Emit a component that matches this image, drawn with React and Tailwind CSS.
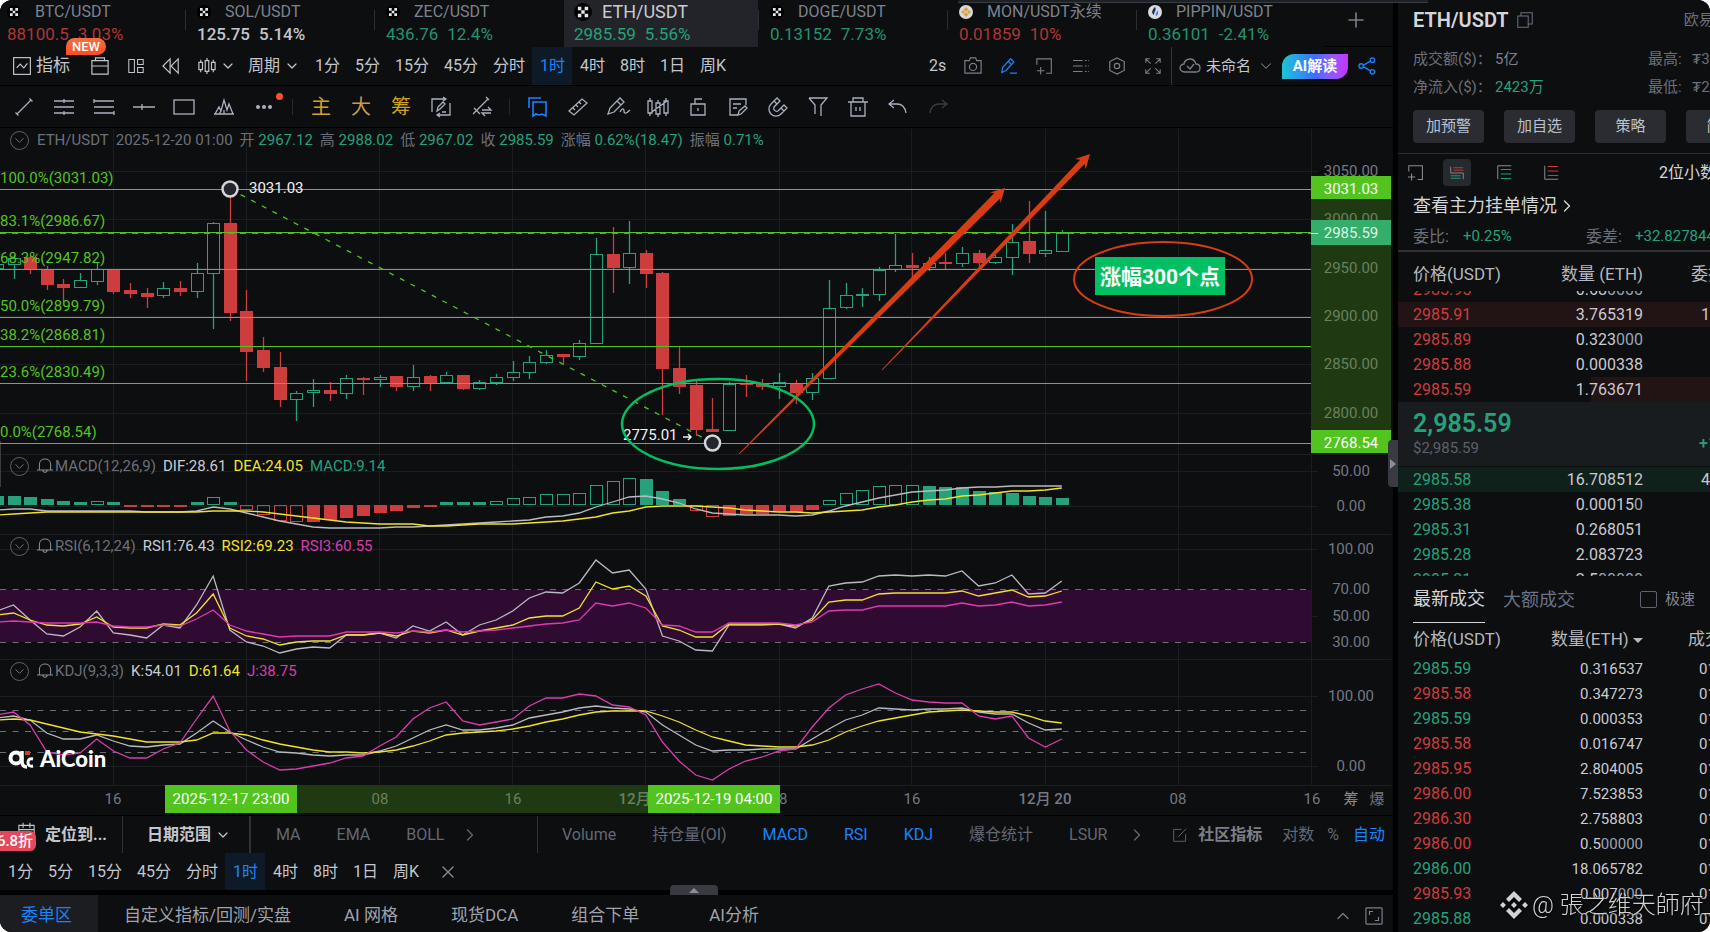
import { useState } from 'react';
import clsx from 'clsx';
import { ChevronDown, ChevronRight, ChevronUp, X, Plus } from 'lucide-react';

const FONT = "font-['Roboto','Noto_Sans_CJK_SC',sans-serif]";

const tabs = [
  { name: 'BTC/USDT', price: '88100.5', change: '3.03%', color: 'text-[#b03535]', width: 'w-[185px] pl-[7px]', icon: 'okx' },
  { name: 'SOL/USDT', price: '125.75', change: '5.14%', color: 'text-[#c3c5ca]', width: 'w-[189px] pl-3', icon: 'okx' },
  { name: 'ZEC/USDT', price: '436.76', change: '12.4%', color: 'text-[#22936f]', width: 'w-[190px] pl-3', icon: 'okx' },
  { name: 'ETH/USDT', price: '2985.59', change: '5.56%', color: 'text-[#25a17c]', width: 'w-[194px] pl-[10px]', icon: 'okx', active: true },
  { name: 'DOGE/USDT', price: '0.13152', change: '7.73%', color: 'text-[#22936f]', width: 'w-[189px] pl-3', icon: 'okx' },
  { name: 'MON/USDT永续', price: '0.01859', change: '10%', color: 'text-[#b03535]', width: 'w-[189px] pl-3', icon: 'bnb' },
  { name: 'PIPPIN/USDT', price: '0.36101', change: '-2.41%', color: 'text-[#22936f]', width: 'w-[189px] pl-3', icon: 'htx' },
];

const frames = ['1分', '5分', '15分', '45分', '分时', '1时', '4时', '8时', '1日', '周K'];

// [up, bodyTop, bodyBottom, high, low]
const candles = [
  [1, 264, 269, 262, 271], [1, 258, 265, 255, 279], [0, 257, 269, 255, 274], [0, 270, 285, 266, 290],
  [0, 284, 288, 279, 302], [1, 280, 288, 273, 288], [1, 269, 282, 263, 285], [0, 270, 292, 270, 294],
  [0, 290, 294, 283, 298], [0, 293, 297, 288, 308], [1, 288, 296, 282, 298], [0, 288, 292, 281, 296],
  [1, 273, 292, 263, 298], [1, 223, 274, 222, 329], [0, 223, 313, 189, 321], [0, 311, 352, 290, 381],
  [0, 350, 368, 337, 372], [0, 367, 400, 352, 407], [1, 393, 400, 391, 421], [1, 390, 393, 379, 407],
  [0, 390, 394, 382, 401], [1, 378, 394, 375, 399], [0, 378, 380, 377, 395], [1, 377, 380, 375, 387],
  [0, 376, 387, 376, 391], [1, 377, 387, 365, 391], [0, 376, 383, 375, 391], [1, 375, 383, 372, 383],
  [0, 375, 389, 375, 390], [1, 382, 389, 380, 390], [1, 377, 383, 374, 385], [1, 372, 378, 361, 381],
  [1, 362, 373, 356, 379], [1, 355, 363, 350, 364], [0, 354, 357, 354, 364], [1, 343, 357, 340, 360],
  [1, 254, 344, 238, 344], [0, 254, 268, 227, 293], [1, 253, 268, 221, 284], [0, 253, 274, 250, 288],
  [0, 273, 369, 272, 415], [0, 368, 387, 347, 394], [0, 385, 430, 381, 436], [0, 429, 432, 398, 432],
  [1, 384, 431, 382, 431], [0, 383, 385, 375, 397], [0, 383, 387, 379, 390], [1, 382, 387, 373, 399],
  [0, 383, 393, 380, 404], [1, 378, 393, 373, 400], [1, 308, 379, 280, 379], [1, 295, 308, 283, 309],
  [1, 294, 296, 288, 307], [1, 270, 295, 267, 301], [1, 265, 270, 234, 272], [0, 265, 268, 253, 277],
  [1, 263, 268, 257, 271], [0, 262, 264, 253, 269], [1, 253, 264, 247, 267], [0, 253, 263, 250, 267],
  [1, 257, 263, 255, 264], [1, 242, 258, 224, 275], [0, 241, 254, 201, 263], [1, 250, 254, 211, 257],
  [1, 233, 252, 230, 252],
];

// MACD histogram: height above (+) or below (-) zero, 'h' marks a hollow bar
const macdBars = [
  '9', '9', '8', '6', '4', '3', '4h', '3', '-2', '-2', '-2', '-2', '3', '8h', '3',
  '-5h', '-10h', '-16h', '-17h', '-17', '-15', '-13', '-11', '-8', '-6', '-3', '-2', '3', '3', '3',
  '4h', '7h', '8h', '11h', '11h', '12h', '20h', '24h', '27h', '26', '14', '6', '-6h', '-12h', '-11',
  '-9', '-9', '-7', '-7', '-5', '5h', '12h', '15h', '19h', '20h', '20h', '19', '18', '18', '14', '13',
  '12', '9', '8', '7',
];

const series = {
  dif: [510, 509, 509, 511, 511, 511, 511, 511, 511, 512, 512, 512, 511, 507, 509, 513, 517, 521, 524, 527, 528, 528, 528, 528, 527, 527, 526, 525, 524, 523, 522, 521, 520, 517, 516, 513, 507, 502, 497, 496, 499, 503, 509, 513, 514, 515, 515, 515, 516, 515, 511, 506, 502, 498, 495, 492, 491, 490, 488, 487, 487, 486, 486, 486, 486],
  dea: [515, 514, 513, 512, 512, 512, 512, 512, 512, 512, 512, 512, 512, 511, 511, 511, 512, 514, 516, 518, 520, 522, 523, 524, 524, 524, 526, 526, 525, 524, 524, 524, 523, 522, 521, 519, 517, 513, 511, 507, 506, 506, 506, 507, 508, 510, 511, 512, 512, 513, 512, 511, 510, 507, 505, 502, 500, 499, 496, 495, 493, 491, 491, 490, 488],
  rsi1: [611, 605, 620, 634, 636, 627, 611, 633, 635, 638, 625, 628, 605, 576, 630, 642, 646, 653, 649, 647, 648, 635, 635, 633, 638, 626, 631, 622, 635, 625, 620, 611, 598, 592, 593, 583, 560, 573, 570, 589, 636, 641, 650, 651, 625, 625, 625, 624, 628, 618, 586, 583, 582, 576, 575, 576, 575, 576, 571, 586, 583, 575, 594, 593, 581],
  rsi2: [615, 613, 620, 625, 626, 624, 617, 627, 628, 628, 624, 625, 613, 594, 628, 636, 639, 645, 642, 641, 641, 635, 635, 633, 636, 631, 633, 630, 635, 631, 628, 625, 618, 616, 616, 608, 582, 589, 586, 596, 626, 630, 637, 637, 624, 624, 624, 624, 626, 620, 602, 600, 600, 594, 593, 593, 593, 593, 591, 596, 593, 590, 597, 596, 591],
  rsi3: [622, 621, 622, 623, 623, 623, 622, 626, 627, 627, 625, 626, 619, 610, 625, 631, 634, 637, 636, 636, 636, 632, 632, 632, 633, 631, 632, 630, 632, 631, 630, 628, 626, 624, 623, 620, 603, 606, 603, 608, 625, 626, 632, 632, 623, 623, 623, 623, 625, 622, 611, 610, 610, 606, 606, 606, 606, 606, 603, 606, 605, 602, 606, 605, 602],
  k: [718, 716, 720, 733, 739, 739, 735, 741, 746, 747, 745, 744, 733, 721, 732, 740, 747, 752, 753, 755, 756, 755, 755, 751, 746, 738, 730, 725, 730, 730, 728, 725, 718, 715, 712, 708, 706, 708, 709, 712, 725, 735, 745, 751, 750, 750, 749, 749, 749, 739, 729, 720, 715, 708, 709, 710, 709, 709, 708, 712, 714, 714, 723, 730, 729],
  d: [720, 719, 720, 724, 728, 732, 734, 736, 739, 742, 742, 742, 740, 733, 733, 735, 740, 744, 747, 750, 752, 752, 753, 752, 750, 746, 741, 735, 733, 732, 731, 729, 726, 722, 719, 715, 712, 711, 711, 711, 716, 722, 730, 737, 741, 745, 746, 747, 747, 745, 740, 732, 726, 721, 718, 715, 712, 711, 710, 711, 712, 712, 716, 721, 723],
  j: [715, 712, 725, 752, 755, 753, 739, 751, 758, 758, 749, 743, 719, 696, 731, 750, 762, 770, 769, 766, 763, 758, 756, 746, 737, 719, 708, 702, 721, 725, 722, 719, 706, 698, 698, 694, 696, 705, 707, 715, 742, 761, 775, 780, 769, 761, 757, 751, 749, 727, 708, 695, 689, 684, 693, 700, 702, 703, 703, 716, 719, 716, 738, 747, 739],
};

const lines = [
  ['dif', '#b9bbc0'], ['dea', '#f0e22c'],
  ['rsi1', '#b9bbc0'], ['rsi2', '#f0e22c'], ['rsi3', '#d83cae'],
  ['k', '#b9bbc0'], ['d', '#f0e22c'], ['j', '#d83cae'],
];

const fibs = [
  ['100.0%(3031.03)', 189], ['83.1%(2986.67)', 232], ['68.3%(2947.82)', 269], ['50.0%(2899.79)', 317],
  ['38.2%(2868.81)', 346], ['23.6%(2830.49)', 383], ['0.0%(2768.54)', 443],
];

const axis = [
  ['3050.00', 171], ['3000.00', 219], ['2950.00', 268], ['2900.00', 316], ['2850.00', 364], ['2800.00', 413],
  ['50.00', 471], ['0.00', 506], ['100.00', 549], ['70.00', 589], ['50.00', 616], ['30.00', 642],
  ['100.00', 696], ['0.00', 766],
];

const times = [
  ['16', 113], ['08', 380], ['16', 513], ['12月 19', 645], ['08', 779], ['16', 912], ['12月 20', 1045], ['08', 1178], ['16', 1312],
];

const asks = [
  ['2985.95', '0.68', '0000', '', 0],
  ['2985.91', '3.765319', '', '1', 100],
  ['2985.89', '0.323', '000', '', 0],
  ['2985.88', '0.000338', '', '', 0],
  ['2985.59', '1.763671', '', '', 38],
];

const bids = [
  ['2985.58', '16.708512', '', '4', 100],
  ['2985.38', '0.00015', '0', '', 0],
  ['2985.31', '0.268051', '', '', 0],
  ['2985.28', '2.083723', '', '', 0],
  ['2985.21', '2.5', '00000', '', 0],
];

const trades = [
  ['2985.59', '0.316537', '', 1], ['2985.58', '0.347273', '', 0], ['2985.59', '0.000353', '', 1],
  ['2985.58', '0.016747', '', 0], ['2985.95', '2.804005', '', 0], ['2986.00', '7.523853', '', 0],
  ['2986.30', '2.758803', '', 0], ['2986.00', '0.5', '00000', 0], ['2986.00', '18.065782', '', 1],
  ['2985.93', '0.007', '000', 0], ['2985.88', '0.000338', '', 1],
];

const xAt = (i) => 13.5 + 16.64 * (i - 1);

function Ico({ children, className = 'size-5', sw = 1.3 }) {
  return (
    <svg viewBox="0 0 20 20" fill="none" stroke="currentColor" strokeWidth={sw} className={clsx('shrink-0 overflow-visible', className)}>
      {children}
    </svg>
  );
}

const drawTools = [
  ['趋势线', <><path d="M3 17 17 3M1.500 15.500l3 3M15.500 1.500l3 3" /></>],
  ['平行线', <path d="M0 4h20M0 10h20M0 16h20M10 2v4M10 14v4" />],
  ['通道', <path d="M0 4h20M0 10h20M0 16h20M0 2v4M20 14v4" />],
  ['水平线', <path d="M-1 10h22M8 7v6" />],
  ['矩形', <rect x="0" y="3" width="20" height="14" />],
  ['形态', <path d="M0 17h20M1 17l4-7 2 4 3-11 3 10 2-6 4 10M5 17l2-3M10 17v-4" />],
  ['更多', <g fill="currentColor" stroke="none"><circle cx="4" cy="10" r="2" /><circle cx="10" cy="10" r="2" /><circle cx="16" cy="10" r="2" /></g>],
];

const signalTools = [
  ['循环编辑', <><path d="M1 13V2h13M12 0l3 2-3 2M19 6v12H7M9 16l-3 2 3 2M1 13v2" /><path d="m6 14 1-4 5-5 2 2-5 5zM9 12l4-4M11 15h4" /></>],
  ['画线切换', <path d="M2 17 17 2M15 0l3 3M3 11l6 6M11 13h9l-3-3M20 16h-9l3 3" />],
];

const editTools = [
  ['测量', <><path d="m1 14 13-12 5 4L6 18zM5 11l2 2M8 8l2 2M11 5l2 2" /></>],
  ['画笔', <><path d="M0 17 2 11 12 1l4 4L6 15zM9 4l4 4M0 17l6-2M12 15c2-4 4-4 4-1s2 3 6-1" /></>],
  ['K线', <><path d="M0 4h4v12H0zM2 1v3M2 16v3M8 6h4v11H8zM10 3v3M10 17v3M16 4h4v12h-4zM18 1v3M18 16v3M1 17 19 4" /></>],
  ['解锁', <><path d="M3 7h14v11H3zM7 7V2h7M10 11v3" /></>],
  ['编辑', <><path d="M18 8V2H2v16h8M5 7h8M5 11h4M10 18l1-4 6-5 2 2-6 6z" /></>],
  ['磁吸', <><path d="M9 1 3 7a7 7 0 0 0 10 10l6-6-3-3-6 6a3 3 0 0 1-4-4l6-6zM6 4l3 3M13 11l3 3" /></>],
  ['筛选', <path d="M1 1h18l-6 7v11M1 1l6 7v9" />],
  ['删除', <path d="M0 5h20M5 5V1h10v4M3 5v14h14V5M8 10v4M12 10v4" />],
  ['撤销', <path d="M6 3 1 7l5 4M1 7h8c5 0 8 3 9 9" />],
];

function ExchangeIcon({ kind, active }) {
  const size = active ? 'size-[18px]' : 'size-[14px]';
  if (kind === 'bnb') {
    return (
      <svg viewBox="0 0 14 14" className={clsx(size, 'shrink-0')}>
        <circle cx="7" cy="7" r="7" fill="#d9d9dc" />
        <path d="m7 2 2.500 2.500L7 7 4.500 4.500zM4 5l2 2-2 2-2-2zM10 5l2 2-2 2-2-2zM7 7l2.500 2.500L7 12 4.500 9.500z" fill="#d9a53a" />
      </svg>
    );
  }
  if (kind === 'htx') {
    return (
      <svg viewBox="0 0 14 14" className={clsx(size, 'shrink-0')}>
        <circle cx="7" cy="7" r="7" fill="#dadbdf" />
        <path d="M7 2c2 3-1 4-1 8C3 8 4 5 7 2z" fill="#1b2a52" />
        <path d="M9 5c2 3 1 5-1 6-1-2 1-3 1-6z" fill="#2a7fd6" />
      </svg>
    );
  }
  return (
    <svg viewBox="0 0 14 14" className={clsx(size, 'shrink-0')}>
      <circle cx="7" cy="7" r="7" fill="#000" />
      <path d="M3 3h2.700v2.700H3zM8.300 3H11v2.700H8.300zM5.700 5.700h2.600v2.600H5.700zM3 8.300h2.700V11H3zM8.300 8.300H11V11H8.300z" fill="#e6e7ea" />
    </svg>
  );
}

function FrameBar({ frame, onPick }) {
  return (
    <div className="flex h-full items-stretch">
      {frames.map((f) => (
        <button
          key={f}
          onClick={() => onPick(f)}
          className={clsx('pr-[7px] pl-2 text-base whitespace-nowrap', f === frame ? 'bg-[#0f1a28] text-[#1684fc]' : 'text-[#c3c6cc]')}
        >
          {f}
        </button>
      ))}
    </div>
  );
}

function SymbolTabs() {
  return (
    <nav className="flex h-[47px] overflow-hidden bg-[#0d0e10]">
      {tabs.map((t, i) => (
        <button
          key={t.name}
          className={clsx('relative shrink-0 text-left', t.width, t.active && 'bg-[#232429]')}
        >
          {i > 0 && !t.active && <span className="absolute top-[10px] left-0 h-5 w-px bg-[#2c2e33]" />}
          <span className={clsx('flex h-[23px] items-center', t.active ? 'gap-[10px] text-lg text-[#c9cbd0]' : 'gap-[14px] text-base text-[#7e828e]')}>
            <ExchangeIcon kind={t.icon} active={t.active} />
            {t.name}
          </span>
          <span className={clsx('flex h-6 items-center gap-[9px] text-[17px]', t.color, i === 1 && 'font-medium')}>
            <span>{t.price}</span>
            <span>{t.change}</span>
          </span>
        </button>
      ))}
      <div className="flex flex-1 items-center justify-center border-b border-black pr-[6px] pb-[6px]">
        <button aria-label="添加" className="text-[#7b7f89]"><Plus size={24} strokeWidth={1.6} /></button>
      </div>
    </nav>
  );
}

function MainToolbar({ frame, onPick }) {
  return (
    <div className="relative flex h-[39px] items-center border-b border-black bg-[#0d0e10] pl-[13px] text-[#c3c6cc]">
      <button className="flex items-center gap-[5px] text-[17px] whitespace-nowrap">
        <Ico className="size-[18px]"><rect x="0.700" y="0.700" width="18.600" height="18.600" /><path d="m4 12 4-4 4 4 4-5" /></Ico>
        指标
      </button>
      <span className="absolute -top-[9px] left-[66px] flex h-[17px] w-10 items-center justify-center rounded-t-full rounded-br-full bg-gradient-to-b from-[#f4703f] to-[#fa4d22] text-[13px] font-medium text-white">
        NEW
      </span>
      <button aria-label="工具箱" className="ml-[21px]"><Ico className="size-[18px]"><path d="M1 4h18v15H1zM1 10h18M5 4V1h10v3" /></Ico></button>
      <button aria-label="布局" className="ml-[19px]"><Ico className="size-4"><path d="M1 2h7v16H1zM12 2h7v6h-7zM12 12h7v6h-7z" /></Ico></button>
      <button aria-label="回放" className="ml-[18px]"><Ico className="size-[18px]"><path d="M9 2 1 10l8 8zM18 2l-8 8 8 8z" /></Ico></button>
      <button aria-label="K线类型" className="ml-[18px] flex items-center gap-1">
        <Ico className="size-[18px]"><path d="M1 6h4v8H1zM3 3v3M3 14v3M8 4h4v12H8zM10 1v3M10 16v3M15 6h4v8h-4zM17 3v3M17 14v3" /></Ico>
        <ChevronDown size={16} strokeWidth={1.8} />
      </button>
      <button className="ml-3 flex items-center gap-1 text-base whitespace-nowrap">
        周期
        <ChevronDown size={16} strokeWidth={1.8} />
      </button>
      <div className="ml-[7px] h-full">
        <FrameBar frame={frame} onPick={onPick} />
      </div>
      <div className="ml-auto flex h-full items-center pr-[17px] text-[#7b7f89]">
        <span className="w-[26px] text-base text-[#c3c6cc]">2s</span>
        <button aria-label="截图" className="flex w-9 justify-center"><Ico className="size-[18px]"><path d="M1 4h5l1-3h6l1 3h5v14H1z" /><circle cx="10" cy="11" r="4" /></Ico></button>
        <button aria-label="画线" className="flex w-9 justify-center text-[#1684fc]"><Ico className="size-4" sw={1.6}><path d="m1 18 1-6L12 1l4 4L6 16zM9 4l4 4M11 19h9" /></Ico></button>
        <button aria-label="添加图表" className="flex w-9 justify-center"><Ico className="size-[17px]"><path d="M1 8V1h17v17h-6M1 15h9M5.500 10.500v9" /></Ico></button>
        <button aria-label="列表" className="flex w-9 justify-center"><Ico className="size-4"><path d="M0 3h12M0 10h12M0 17h12" /><path d="M15 3h2M15 10h2M15 17h2M19 3h1M19 10h1M19 17h1" /></Ico></button>
        <button aria-label="设置" className="flex w-9 justify-center"><Ico className="size-[18px]"><path d="m10 1 8 4v10l-8 4-8-4V5z" /><circle cx="10" cy="10" r="3" /></Ico></button>
        <button aria-label="全屏" className="flex w-9 justify-center"><Ico className="size-4"><path d="M6 1H1v5M1 1l6 6M14 1h5v5M19 1l-6 6M6 19H1v-5M1 19l6-6M14 19h5v-5M19 19l-6-6" /></Ico></button>
        <span className="h-full w-px bg-[#34363b]" />
        <button className="ml-2 flex items-center gap-[6px] text-[15px] whitespace-nowrap text-[#c3c6cc]">
          <Ico className="size-5 text-[#7b7f89]"><path d="M5 16C1 16 0 13 0 12c0-2 2-4 4-4 0-3 3-5 6-5s5 2 6 5c3 0 4 2 4 4s-1 4-4 4zM7 10l3 3 4-5" /></Ico>
          未命名
          <ChevronDown size={18} strokeWidth={1.4} className="text-[#7b7f89]" />
        </button>
        <button className="ml-[7px] h-[25px] w-[66px] rounded-tl-xl rounded-br-xl bg-gradient-to-r from-[#1fc3d0] via-[#3d6bff] to-[#c531ff] text-[15px] font-bold text-white">AI解读</button>
        <button aria-label="分享" className="ml-[10px] text-[#1684fc]"><Ico className="size-[18px]" sw={1.5}><circle cx="3.500" cy="10" r="2.500" /><circle cx="16" cy="3.500" r="2.500" /><circle cx="16" cy="16.500" r="2.500" /><path d="m6 9 8-4.500M6 11l8 4.500" /></Ico></button>
      </div>
    </div>
  );
}

function DrawToolbar() {
  return (
    <div className="flex h-[42px] items-center border-b border-black bg-[#0d0e10] pl-1 text-[#a9b0bf]">
      {drawTools.map(([label, art]) => (
        <button key={label} aria-label={label} className="relative flex w-10 justify-center">
          <Ico>{art}</Ico>
          {label === '更多' && <span className="absolute -top-1 right-[1px] size-[7px] rounded-full bg-[#f8522b]" />}
        </button>
      ))}
      <span className="mx-2 h-4 w-px bg-[#26282d]" />
      <button className="w-10 text-xl text-[#d0a422]">主</button>
      <button className="w-10 text-xl text-[#c99a4c]">大</button>
      <button className="w-10 text-xl text-[#d0a422]">筹</button>
      {signalTools.map(([label, art]) => (
        <button key={label} aria-label={label} className="flex w-10 justify-center"><Ico>{art}</Ico></button>
      ))}
      <span className="mx-2 h-4 w-px bg-[#26282d]" />
      <button aria-label="收藏" className="flex w-10 justify-center text-[#1684fc]"><Ico sw={1.6}><path d="M5 5h13v14l-4-2-3 1-3-1-3 2zM1 11V1h12" /></Ico></button>
      {editTools.map(([label, art]) => (
        <button key={label} aria-label={label} className="flex w-10 justify-center"><Ico>{art}</Ico></button>
      ))}
      <button aria-label="重做" disabled className="flex w-10 justify-center text-[#3a3d43]"><Ico><path d="m14 3 5 4-5 4M19 7h-8c-5 0-8 3-9 9" /></Ico></button>
    </div>
  );
}

function FoldButton() {
  return (
    <button aria-label="折叠" className="flex size-[19px] items-center justify-center rounded-full border border-[#5d6068]">
      <ChevronDown size={15} strokeWidth={1.6} />
    </button>
  );
}

function Legend({ top, title, values }) {
  return (
    <div className={clsx('absolute left-[10px] flex h-5 items-center text-[15px] whitespace-nowrap text-[#6c707a]', top)}>
      <FoldButton />
      <Ico className="ml-2 size-4 text-[#8a8d95]"><path d="M0 15h20M3 15V8c0-9 14-9 14 0v7M7 15c1 4 5 4 6 0" /></Ico>
      <span className="ml-[2px]">{title}</span>
      {values.map(([text, color]) => (
        <span key={text} className={clsx('ml-[7px]', color)}>{text}</span>
      ))}
    </div>
  );
}

// tapered arrow from (x1, y1) to the tip (x2, y2)
function Arrow({ x1, y1, x2, y2, shaft, head }) {
  const len = Math.hypot(x2 - x1, y2 - y1);
  const ux = (x2 - x1) / len;
  const uy = (y2 - y1) / len;
  const at = (d, side) => `${x2 - ux * d - uy * side},${y2 - uy * d + ux * side}`;
  const points = [at(len, 0.5), at(11, shaft / 2), at(14, head / 2), `${x2},${y2}`, at(14, -head / 2), at(11, -shaft / 2), at(len, -0.5)];
  return <polygon points={points.join(' ')} fill="#d83c12" />;
}

function Chart() {
  return (
    <div className="relative bg-[#0d0e10]">
      <svg viewBox="0 128 1393 687" className="block w-full" fontSize="15">
        <g stroke="#1c1d21">
          {[113, 246, 379, 512, 645, 779, 911, 1045, 1178, 1311].map((x) => <path key={x} d={`M${x}.5 129V786`} />)}
          {[171, 219, 268, 316, 364, 413, 471, 506, 549, 616, 696, 766].map((y) => <path key={y} d={`M0 ${y}.5H1318`} />)}
          {[454, 534, 659, 785].map((y) => <path key={y} d={`M0 ${y}.5H1391`} />)}
        </g>
        <rect x="0" y="441" width="1" height="46" fill="#3b3c42" />

        <rect x="0" y="590" width="1311" height="52" fill="#300b31" />
        <g stroke="#6c6f78" strokeDasharray="6 6.500">
          {[589, 642, 710, 731, 752].map((y) => <path key={y} d={`M0 ${y}.5H1311`} />)}
        </g>

        {candles.map(([up, top, bottom, high, low], i) => {
          const x = Math.round(xAt(i));
          const color = up ? '#25a17c' : '#cd3d3d';
          return (
            <g key={i} stroke={color}>
              <path d={`M${x + 0.5} ${high}V${top}M${x + 0.5} ${bottom}V${low}`} strokeWidth="1.300" />
              <rect x={x - 5.5} y={top + 0.5} width="12" height={Math.max(bottom - top - 1, 1)} fill={up ? 'none' : color} />
            </g>
          );
        })}

        {macdBars.map((bar, i) => {
          const v = parseInt(bar, 10);
          const color = v > 0 ? '#25a17c' : '#cd3d3d';
          return (
            <rect
              key={i}
              x={Math.round(xAt(i)) - 5.5}
              y={v > 0 ? 505.5 - v : 505.5}
              width="12"
              height={Math.abs(v) - 1}
              fill={bar.endsWith('h') ? 'none' : color}
              stroke={color}
            />
          );
        })}

        {lines.map(([key, color]) => (
          <polyline key={key} points={series[key].map((y, i) => `${xAt(i)},${y}`).join(' ')} fill="none" stroke={color} strokeWidth="1.300" />
        ))}

        <path d="M0 233.500H1311" stroke="#35ad6b" strokeDasharray="6 6" />
        {fibs.map(([label, y]) => (
          <g key={label}>
            <path d={`M0 ${y}.5H1311`} stroke="#53c41f" />
            <text x="0" y={y - 6} fill="#53c41f">{label}</text>
          </g>
        ))}
        <path d="M230 189 713 443" stroke="#53c41f" strokeWidth="1.300" strokeDasharray="5 7" />
        <g fill="#25262b" stroke="#d5d6da" strokeWidth="2.500">
          <circle cx="230" cy="189" r="7.500" />
          <circle cx="712.500" cy="443" r="7.500" />
        </g>
        <text x="249" y="193" fill="#f2f2f2">3031.03</text>
        <text x="623" y="440" fill="#f2f2f2">2775.01</text>
        <path d="M683 437h8M688 434l3 3-3 3" fill="none" stroke="#f2f2f2" strokeWidth="1.500" />

        <rect x="1311" y="176" width="80" height="277" fill="#1f3a12" />
        <g textAnchor="middle">
          {axis.map(([label, y]) => (
            <text key={y} x="1351" y={y + 5} fill={y > 180 && y < 450 ? '#69805f' : '#747884'}>{label}</text>
          ))}
          <rect x="1311" y="176" width="80" height="23" fill="#53c41f" />
          <rect x="1311" y="220" width="80" height="25" fill="#35ad6b" />
          <rect x="1311" y="430" width="80" height="23" fill="#53c41f" />
          <path d="M1311 233.500h7" stroke="#fff" />
          <g fill="#fff">
            <text x="1351" y="194">3031.03</text>
            <text x="1351" y="238" fill="#dff5e8">2985.59</text>
            <text x="1351" y="448">2768.54</text>
          </g>

          <rect x="297" y="785" width="351" height="28" fill="#1f3a12" />
          {times.map(([label, x]) => (
            <text key={x} x={x} y="804" fill={x > 297 && x < 648 ? '#69805f' : '#747884'} fontWeight={label.length > 2 ? 500 : 400}>{label}</text>
          ))}
          <rect x="165" y="785" width="132" height="28" fill="#53c41f" />
          <rect x="648" y="785" width="132" height="28" fill="#53c41f" />
          <g fill="#fff">
            <text x="231" y="804">2025-12-17 23:00</text>
            <text x="714" y="804">2025-12-19 04:00</text>
          </g>
          <text x="1351" y="804" fill="#8a8e98">筹</text>
          <text x="1377" y="804" fill="#747884">爆</text>
        </g>

        <Arrow x1={739} y1={454} x2={1005} y2={188} shaft={8} head={15} />
        <Arrow x1={882} y1={370} x2={1090} y2={154} shaft={6} head={15} />
        <ellipse cx="718" cy="424" rx="96" ry="45" fill="none" stroke="#03bd61" strokeWidth="2.500" />
        <ellipse cx="1163" cy="279" rx="89" ry="37" fill="none" stroke="#d83c12" strokeWidth="2" />
        <rect x="1095" y="257" width="130" height="38" fill="#03bf63" />
        <text x="1160" y="284" fill="#fff" fontSize="21" fontWeight="700" textAnchor="middle">涨幅300个点</text>

        <g fill="none" stroke="#fff" strokeWidth="4">
          <circle cx="16" cy="758" r="5.500" />
          <path d="M22 751v10q0 6 5 6" strokeWidth="3.500" />
          <path d="M33 759q-5-1-5 3.500t5 3.500" strokeWidth="3" />
        </g>
        <path d="M25 751h5v4h-5z" fill="#d83c12" />
        <text x="40" y="767" fill="#fff" fontFamily="Lato, sans-serif" fontWeight="900" fontSize="22">AiCoin</text>
      </svg>

      <div className="absolute top-[2px] left-[10px] flex h-5 items-center text-[15px] whitespace-nowrap text-[#6c707a]">
        <FoldButton />
        <span className="ml-2">ETH/USDT</span>
        <span className="ml-[7px]">2025-12-20 01:00</span>
        {[['开', '2967.12'], ['高', '2988.02'], ['低', '2967.02'], ['收', '2985.59'], ['涨幅', '0.62%(18.47)'], ['振幅', '0.71%']].map(([k, v]) => (
          <span key={k} className="ml-[7px]">{k} <span className="text-[#25a17c]">{v}</span></span>
        ))}
      </div>
      <Legend top="top-[328px]" title="MACD(12,26,9)" values={[['DIF:28.61', 'text-[#c9cbd0]'], ['DEA:24.05', 'text-[#f0e22c]'], ['MACD:9.14', 'text-[#25a17c]']]} />
      <Legend top="top-[408px]" title="RSI(6,12,24)" values={[['RSI1:76.43', 'text-[#c9cbd0]'], ['RSI2:69.23', 'text-[#f0e22c]'], ['RSI3:60.55', 'text-[#d83cae]']]} />
      <Legend top="top-[533px]" title="KDJ(9,3,3)" values={[['K:54.01', 'text-[#c9cbd0]'], ['D:61.64', 'text-[#f0e22c]'], ['J:38.75', 'text-[#d83cae]']]} />
      <button aria-label="收起侧栏" className="absolute top-[312px] -right-[5px] z-10 flex h-[47px] w-[10px] items-center justify-center rounded-l bg-[#3a3b42]">
        <svg viewBox="0 0 6 10" className="h-[10px] w-[6px]"><path d="m0 0 6 5-6 5z" fill="#8b8e96" /></svg>
      </button>
    </div>
  );
}

function IndicatorBar() {
  const left = ['MA', 'EMA', 'BOLL'];
  const right = ['Volume', '持仓量(OI)', 'MACD', 'RSI', 'KDJ', '爆仓统计', 'LSUR'];
  const on = ['MACD', 'RSI', 'KDJ'];
  return (
    <div className="relative flex h-[38px] items-center border-t border-black bg-[#0d0e10] text-base whitespace-nowrap text-[#646873]">
      <button className="flex h-full w-[123px] items-center gap-[10px] border-r border-[#303237] pl-[18px] font-bold text-[#c3c6cc]">
        <Ico className="mb-[9px] size-[17px]"><path d="M1 4h18v14H1zM1 9h18M6 1v6M14 1v6" /></Ico>
        定位到...
      </button>
      <span className="absolute -left-[6px] top-[15px] flex h-5 w-[42px] items-center justify-center rounded-md bg-[#e2495a] text-[15px] font-medium text-white">6.8折</span>
      <button className="flex h-full w-[128px] items-center gap-1 border-r-2 border-[#303237] pl-6 font-bold text-[#c3c6cc]">
        日期范围
        <ChevronDown size={16} strokeWidth={1.8} />
      </button>
      <div className="flex h-full w-[287px] items-center gap-9 border-r border-[#303237] pl-[25px]">
        {left.map((n) => <button key={n}>{n}</button>)}
        <ChevronRight size={20} strokeWidth={1.5} className="-ml-5" />
      </div>
      <div className="flex items-center gap-9 pl-6">
        {right.map((n) => <button key={n} className={clsx(on.includes(n) && 'text-[#1684fc]')}>{n}</button>)}
        <ChevronRight size={20} strokeWidth={1.5} className="-ml-4" />
      </div>
      <div className="ml-auto flex items-center pr-2">
        <Ico className="size-[14px]"><path d="M12 2H1v17h17V9M8 12 19 1" /></Ico>
        <button className="ml-[11px] font-bold text-[#7b7f89]">社区指标</button>
        <button className="ml-5">对数</button>
        <button className="ml-[13px]">%</button>
        <button className="ml-[14px] text-[#1684fc]">自动</button>
      </div>
    </div>
  );
}

function BottomTabs() {
  const items = ['自定义指标/回测/实盘', 'AI 网格', '现货DCA', '组合下单'];
  return (
    <div className="relative mt-[5px] flex h-[37px] items-center bg-[#0d0e10] pt-1 text-[17px] whitespace-nowrap text-[#a0a3ab]">
      <button aria-label="展开" className="absolute bottom-full left-[670px] flex h-[10px] w-12 items-center justify-center rounded-t bg-[#3a3b42]">
        <svg viewBox="0 0 10 5" className="h-[5px] w-[10px]"><path d="m0 5 5-5 5 5z" fill="#8b8e96" /></svg>
      </button>
      <button className="-mt-1 h-[37px] w-[98px] bg-[#1c1d21] pt-1 pr-[5px] text-[#1684fc]">委单区</button>
      <div className="flex items-center gap-[53px] pl-[26px]">
        {items.map((n) => <button key={n}>{n}</button>)}
      </div>
      <button className="ml-[70px]">AI分析</button>
      <div className="ml-auto flex items-center gap-3 pr-[10px] text-[#7b7f89]">
        <ChevronUp size={20} strokeWidth={1.5} />
        <button aria-label="全屏" className="flex"><Ico className="size-[18px]"><rect x="1" y="1" width="18" height="18" rx="1" /><path d="M5 9V5h4M15 11v4h-4" /></Ico></button>
      </div>
    </div>
  );
}

function BookRows({ rows, up }) {
  return (
    <table className="w-full shrink-0 table-fixed">
      <tbody>
        {rows.map(([price, qty, zeros, total, depth]) => (
          <tr
            key={price}
            className="h-[25px] text-base leading-6 whitespace-nowrap"
            style={depth ? { background: `linear-gradient(to left, ${up ? '#10201b' : '#221315'} ${depth}%, transparent ${depth}%)` } : undefined}
          >
            <td className={clsx('w-[125px] pl-[15px]', up ? 'text-[#25a17c]' : 'text-[#cd3d3d]')}>{price}</td>
            <td className="w-[120px] text-right text-[#c9cbd0]">{qty}<span className="text-[#9aa3b5]">{zeros}</span></td>
            <td className="pl-[58px] text-[#c9cbd0]">{total}</td>
          </tr>
        ))}
      </tbody>
    </table>
  );
}

function SidePanel() {
  const [fast, setFast] = useState(false);
  return (
    <aside className="relative flex w-[312px] shrink-0 flex-col overflow-hidden bg-[#0d0e10] whitespace-nowrap">
      <header className="border-b border-[#2b2d31]">
        <div className="flex h-10 items-center pl-[15px]">
          <h1 className="text-xl font-semibold text-[#d5d6da]">ETH/USDT</h1>
          <button aria-label="复制" className="ml-2 text-[#6c707a]"><Ico className="size-4"><path d="M1 5h13v14H1zM5 5V1h14v14h-5" /></Ico></button>
          <span className="ml-[151px] text-[15px] text-[#6c707a]">欧易</span>
        </div>
        <dl className="flex flex-col text-[15px] text-[#6c707a]">
          <div className="mt-[5px] flex h-7 items-center pl-[15px]">
            <dt className="w-[82px] shrink-0">成交额($)：</dt>
            <dd className="w-[153px] shrink-0 text-[#7e828e]">5亿</dd>
            <dt className="w-11 shrink-0">最高:</dt>
            <dd>₮3,031.03</dd>
          </div>
          <div className="flex h-7 items-center pl-[15px]">
            <dt className="w-[82px] shrink-0">净流入($)：</dt>
            <dd className="w-[153px] shrink-0 text-[#25a17c]">2423万</dd>
            <dt className="w-11 shrink-0">最低:</dt>
            <dd>₮2,775.01</dd>
          </div>
        </dl>
        <div className="mt-[9px] mb-[10px] flex gap-5 pl-[15px]">
          {['加预警', '加自选', '策略', '简况'].map((n) => (
            <button key={n} className="h-[33px] w-[71px] shrink-0 rounded bg-[#2b2c32] text-[15px] text-[#b9c3d3]">{n}</button>
          ))}
        </div>
      </header>

      <section className="border-b-2 border-[#2f3136]">
        <div className="flex h-[37px] items-center pl-[10px]">
          <button aria-label="拆分" className="shrink-0 text-[#8a8e98]"><Ico className="size-4"><path d="M1 8V1h17v17h-6M0 15h9M4.500 10.500v9" /></Ico></button>
          <button aria-label="全部挂单" className="ml-[19px] flex h-[27px] w-7 shrink-0 items-center justify-center rounded bg-[#26292d] text-[#8a8e98]">
            <Ico className="size-[14px]"><path d="M1 1v9h18v9" /><path d="M5 2.500h14M5 6h14" stroke="#cd3d3d" /><path d="M1 14h14M1 17.500h14" stroke="#25a17c" /></Ico>
          </button>
          <button aria-label="买单" className="ml-[22px] shrink-0 pl-1 text-[#8a8e98]"><Ico className="size-[15px]"><path d="M19 1H1v18" /><path d="M5 6h14M5 12h14M5 18h14" stroke="#25a17c" /></Ico></button>
          <button aria-label="卖单" className="ml-8 shrink-0 text-[#8a8e98]"><Ico className="size-[15px]"><path d="M1 1v18h18" /><path d="M5 2h14M5 8h14M5 14h14" stroke="#cd3d3d" /></Ico></button>
          <span className="ml-[100px] shrink-0 text-base text-[#d5d6da]">2位小数</span>
        </div>
        <a href="#orders" className="flex h-[30px] items-center pl-[15px] text-lg text-[#d5d6da]">
          查看主力挂单情况
          <ChevronRight size={20} strokeWidth={1.6} />
        </a>
        <div className="flex h-[29px] items-center pt-[2px] pl-[15px] text-base text-[#6c707a]">
          <span className="w-[50px] shrink-0">委比:</span>
          <span className="w-[123px] shrink-0 text-[15px] text-[#25a17c]">+0.25%</span>
          <span className="w-[49px] shrink-0">委差:</span>
          <span className="text-[15px] text-[#25a17c]">+32.827844</span>
        </div>
      </section>

      <section id="orders">
        <div className="flex h-[39px] items-center pt-[6px] text-[17px] text-[#b5b8bf]">
          <span className="w-[125px] shrink-0 pl-[15px]">价格(USDT)</span>
          <span className="w-[120px] shrink-0 text-right">数量 (ETH)</span>
          <span className="pl-12">委托</span>
        </div>
        <div className="flex h-[111px] flex-col justify-end overflow-hidden">
          <BookRows rows={asks} />
        </div>
        <div className="flex h-[65px] items-center justify-between border-b border-[#0d0e10] bg-[#191c1f] pl-[15px]">
          <div>
            <div className="text-[25px] leading-7 font-semibold text-[#25a17c]">2,985.59</div>
            <div className="text-[15px] leading-5 text-[#5d6068]">$2,985.59</div>
          </div>
          <span className="mt-5 w-[11px] overflow-hidden font-medium text-[#25a17c]">+1</span>
        </div>
        <div className="h-[109px] overflow-hidden">
          <BookRows rows={bids} up />
        </div>
      </section>

      <section>
        <div className="flex h-[47px] items-center pl-[15px] text-lg text-[#6c7488]">
          <button className="h-full border-b border-[#d5d6da] text-[#d5d6da]">最新成交</button>
          <button className="ml-[18px]">大额成交</button>
          <label className="ml-auto flex items-center gap-2 pr-[15px] text-[15px] text-[#7e8492]">
            <input
              type="checkbox"
              checked={fast}
              onChange={(e) => setFast(e.target.checked)}
              className="size-[17px] appearance-none rounded-[2px] border border-[#5b6372] checked:bg-[#1684fc]"
            />
            极速
          </label>
        </div>
        <table className="w-full table-fixed">
          <thead>
            <tr className="h-[33px] text-[17px] text-[#b5b8bf]">
              <th className="w-[120px] pl-[15px] text-left font-normal">价格(USDT)</th>
              <th className="w-[125px] text-right font-normal">
                数量(ETH) <span className="inline-block border-x-[5px] border-t-[5px] border-x-transparent border-t-[#b5b8bf] align-middle" />
              </th>
              <th className="pl-[45px] text-left font-normal">成交</th>
            </tr>
          </thead>
          <tbody>
            {trades.map(([price, qty, zeros, up], i) => (
              <tr key={i} className="h-[25px] text-[15px] leading-6">
                <td className={clsx('pl-[15px] text-base', up ? 'text-[#25a17c]' : 'text-[#cd3d3d]')}>{price}</td>
                <td className="text-right text-[#c9cbd0]">{qty}<span className="text-[#9aa3b5]">{zeros}</span></td>
                <td className="pl-14 text-[#c9cbd0]">01:00</td>
              </tr>
            ))}
          </tbody>
        </table>
      </section>

      <div className="absolute bottom-[9px] left-[102px] flex h-9 items-center text-2xl text-[#d2d2d2] drop-shadow-[1px_1px_1px_#000]">
        <svg viewBox="0 0 28 28" className="size-7" fill="currentColor">
          <path d="m14 0 8 8-3 3-5-5-5 5-3-3zM3 11l3 3-3 3-3-3zM25 11l3 3-3 3-3-3zM14 11l3 3-3 3-3-3zM14 28l-8-8 3-3 5 5 5-5 3 3z" />
        </svg>
        <span className="ml-1 font-light">@ 張之维天師府_</span>
      </div>
    </aside>
  );
}

export default function App() {
  const [frame, setFrame] = useState('1时');

  return (
    <div className={clsx('min-h-screen bg-white', FONT)}>
      <div className="relative flex min-h-screen gap-[5px] overflow-hidden rounded-xl bg-black">
        <main className="flex min-w-0 flex-1 flex-col">
          <SymbolTabs />
          <MainToolbar frame={frame} onPick={setFrame} />
          <DrawToolbar />
          <Chart />
          <IndicatorBar />
          <div className="flex h-[37px] items-center bg-[#0d0e10]">
            <FrameBar frame={frame} onPick={setFrame} />
            <button aria-label="关闭" className="ml-3 text-[#8a8e98]"><X size={20} strokeWidth={1.5} /></button>
          </div>
          <BottomTabs />
        </main>
        <SidePanel />
        <div className="absolute top-0 right-[282px] h-[3px] w-[470px] border-b border-[#383b41] bg-[#1d2126]" />
      </div>
    </div>
  );
}
